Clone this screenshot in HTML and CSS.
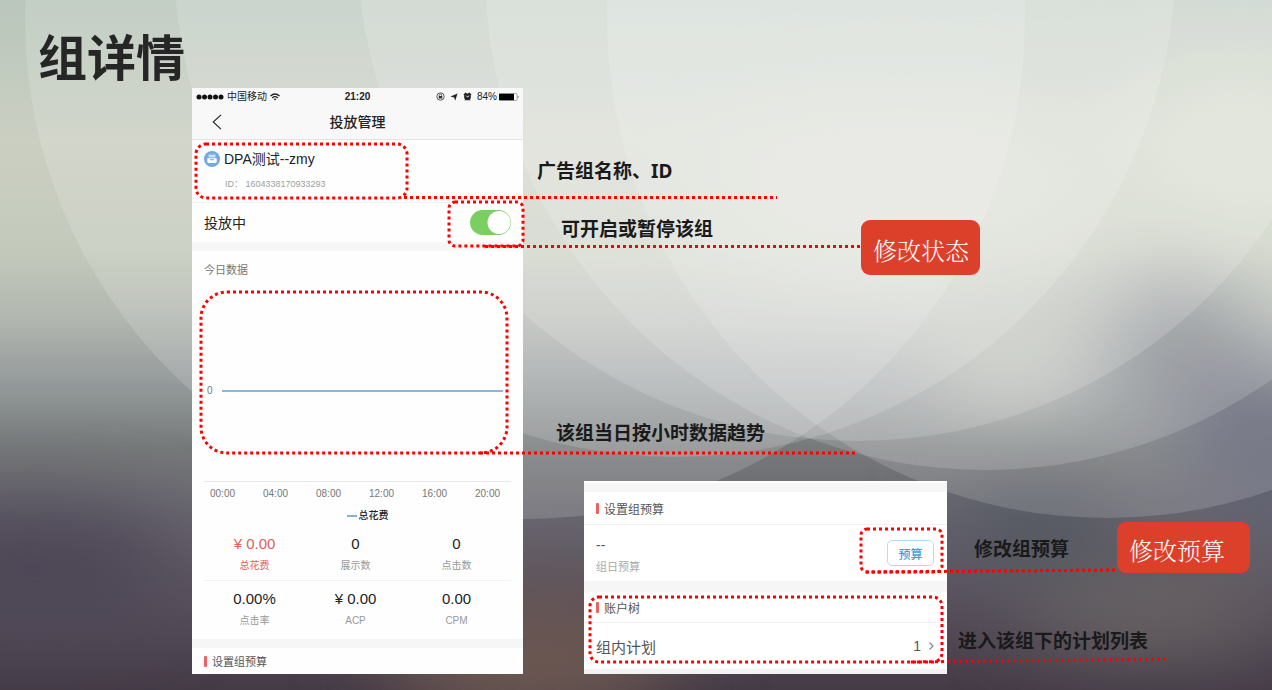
FILE: index.html
```html
<!DOCTYPE html>
<html lang="zh-CN">
<head>
    <meta charset="UTF-8">
    <meta name="viewport" content="width=device-width, initial-scale=1.0">
    <title>组详情</title>
    <link rel="stylesheet" href="styles.css">
</head>
<body>
    <svg class="backdrop" viewBox="0 0 1272 690" preserveAspectRatio="none" aria-hidden="true">
        <defs>
            <linearGradient id="base" x1="0" y1="0" x2="0" y2="1">
                <stop offset="0" stop-color="#b9c6bb"/>
                <stop offset="0.2" stop-color="#cacfc2"/>
                <stop offset="0.36" stop-color="#c4cabb"/>
                <stop offset="0.46" stop-color="#b2b7b0"/>
                <stop offset="0.56" stop-color="#93989a"/>
                <stop offset="0.65" stop-color="#76797a"/>
                <stop offset="0.74" stop-color="#696770"/>
                <stop offset="0.85" stop-color="#5c5460"/>
                <stop offset="1" stop-color="#443b47"/>
            </linearGradient>
            <filter id="soft" x="-100%" y="-100%" width="300%" height="300%" color-interpolation-filters="sRGB">
                <feGaussianBlur stdDeviation="42"/>
            </filter>
        </defs>
        <rect width="1272" height="690" fill="url(#base)"/>
        <g filter="url(#soft)">
            <ellipse cx="900" cy="190" rx="200" ry="90" fill="#d0d4c8"/>
            <ellipse cx="1240" cy="150" rx="120" ry="90" fill="#d2d8c9"/>
            <ellipse cx="1010" cy="350" rx="80" ry="50" fill="#b9beb2"/>
            <ellipse cx="1180" cy="360" rx="70" ry="80" fill="#777b82"/>
            <ellipse cx="1260" cy="450" rx="80" ry="80" fill="#5e6072"/>
            <ellipse cx="1040" cy="530" rx="90" ry="40" fill="#4f5660"/>
            <ellipse cx="1150" cy="610" rx="130" ry="40" fill="#6b6665"/>
            <ellipse cx="30" cy="570" rx="150" ry="60" fill="#4c4555"/>
            <ellipse cx="530" cy="660" rx="150" ry="60" fill="#6f5a52"/>
        </g>
        <g fill="#fff" fill-opacity="0.15">
            <circle cx="525" cy="19" r="500"/>
            <circle cx="675" cy="-44" r="501"/>
            <circle cx="857" cy="-59" r="500"/>
            <circle cx="985" cy="-30" r="500"/>
            <circle cx="1107" cy="18" r="500"/>
        </g>
    </svg>

    <main class="slide">
        <h1>组详情</h1>
        <div class="screens">
            <section class="phone">
                <div class="status-bar">
                    <div class="status-left">
                        <svg width="28" height="8" viewBox="0 0 28 8"><g fill="#111"><circle cx="3" cy="4" r="2.5"/><circle cx="8.5" cy="4" r="2.5"/><circle cx="14" cy="4" r="2.5"/><circle cx="19.500" cy="4" r="2.500"/><circle cx="25" cy="4" r="2.500"/></g></svg>
                        <span>中国移动</span>
                        <svg width="10" height="8" viewBox="0 0 10 8" fill="none" stroke="#222" stroke-width="1.3"><path d="M.5 3Q5-1 9.500 3M2.200 4.900Q5 2.500 7.800 4.900"/><path d="M3.600 6 5 7.600 6.400 6Q5 5 3.600 6Z" fill="#222" stroke="none"/></svg>
                    </div>
                    <strong>21:20</strong>
                    <div class="status-right">
                        <svg width="9" height="9" viewBox="0 0 9 9" fill="none" stroke="#333"><circle cx="4.500" cy="4.500" r="3.700" stroke-width=".8"/><rect x="2.700" y="4" width="3.600" height="2.500" fill="#333" stroke="none"/><path d="M3.400 4V3.200a1.100 1.100 0 0 1 2.200 0V4" stroke-width=".7"/></svg>
                        <svg width="8" height="8" viewBox="0 0 8 8" fill="#222"><path d="M7.500.5 5.200 7.800 4.200 4.400.5 3.600Z"/></svg>
                        <svg width="9" height="9" viewBox="0 0 9 9" fill="#222"><circle cx="4.500" cy="4.800" r="3.400"/><path d="M.5 2.500 2.600.5 4 1.600 1.500 3.800ZM8.500 2.500 6.400.5 5 1.600 7.500 3.800ZM1.500 8.500 2.500 6.500 4 8ZM7.500 8.500 6.500 6.500 5 8Z"/><path d="M3.200 3.600 4.500 5 6.200 3.800" fill="none" stroke="#fff" stroke-width=".9"/></svg>
                        <span>84%</span>
                        <svg width="20" height="8" viewBox="0 0 20 8"><rect x=".5" y=".5" width="17.500" height="7" rx="1" fill="#fff" stroke="#777" stroke-width=".6"/><rect x="0" y=".8" width="15" height="6.400" fill="#000"/><path d="M18.800 2.500Q20.300 4 18.800 5.500Z" fill="#555"/></svg>
                    </div>
                </div>
                <div class="nav-bar">
                    <button class="back" type="button" aria-label="返回"><svg width="10" height="16" viewBox="0 0 10 16" fill="none" stroke="#222" stroke-width="1.100"><path d="M9 .8 1.200 8 9 15.200"/></svg></button>
                    <h2>投放管理</h2>
                </div>
                <div class="group-info">
                    <div class="group-name">
                        <svg width="16" height="16" viewBox="0 0 16 16"><circle cx="8" cy="8" r="8" fill="#72a9e2"/><path d="M4.500 3.500h7v3h-7Z" fill="#b9d6f3"/><path d="M3.300 7.200H12.700V10.500Q12.700 12 11.200 12H4.800Q3.300 12 3.300 10.500Z" fill="#fff"/><path d="M6 8.700h4" stroke="#72a9e2"/><path d="M6 4v2M8 4v2M10 4v2" stroke="#fff" stroke-width=".7"/></svg>
                        <span>DPA测试--zmy</span>
                    </div>
                    <p class="group-id">ID： 1604338170933293</p>
                </div>
                <div class="switch-row">
                    <label for="switch">投放中</label>
                    <input class="switch" type="checkbox" id="switch" checked>
                </div>
                <div class="today">
                    <h3>今日数据</h3>
                    <div class="chart">
                        <span>0</span>
                        <div class="chart-line"></div>
                    </div>
                    <div class="axis">
                        <span>00:00</span>
                        <span>04:00</span>
                        <span>08:00</span>
                        <span>12:00</span>
                        <span>16:00</span>
                        <span>20:00</span>
                    </div>
                    <div class="legend">总花费</div>
                    <dl class="stats">
                        <div class="stat active"><dt>总花费</dt><dd>¥ 0.00</dd></div>
                        <div class="stat"><dt>展示数</dt><dd>0</dd></div>
                        <div class="stat"><dt>点击数</dt><dd>0</dd></div>
                    </dl>
                    <dl class="stats">
                        <div class="stat"><dt>点击率</dt><dd>0.00%</dd></div>
                        <div class="stat"><dt>ACP</dt><dd>¥ 0.00</dd></div>
                        <div class="stat"><dt>CPM</dt><dd>0.00</dd></div>
                    </dl>
                </div>
                <h3 class="bar-title">设置组预算</h3>
            </section>

            <section class="budget">
                <h3 class="bar-title">设置组预算</h3>
                <div class="budget-row">
                    <div class="budget-text">
                        <p class="amount">--</p>
                        <p class="amount-label">组日预算</p>
                    </div>
                    <button class="budget-btn" type="button">预算</button>
                </div>
                <h3 class="bar-title tree">账户树</h3>
                <a class="plan-row" href="#">
                    <span>组内计划</span>
                    <span class="count">1</span>
                    <svg width="5" height="8" viewBox="0 0 5 8" fill="none" stroke="#888" stroke-width="1.200"><path d="M.5.5 4 4 .5 7.500"/></svg>
                </a>
            </section>
        </div>

        <!-- 标注框和引线 -->
        <svg class="marks" aria-hidden="true">
            <rect x="196" y="144" width="211" height="54" rx="10"/>
            <rect x="449" y="202" width="74" height="44" rx="6"/>
            <rect x="201" y="292" width="306" height="161" rx="26"/>
            <rect x="861" y="529" width="81" height="43" rx="6"/>
            <rect x="590" y="597" width="352" height="65" rx="9"/>
            <path d="M404 197.500H777M485 246.500H860M480 453H856M866 572 1118 570M911 662 1168 659"/>
        </svg>
        <p class="note note-name">广告组名称、ID</p>
        <p class="note note-switch">可开启或暂停该组</p>
        <p class="note note-trend">该组当日按小时数据趋势</p>
        <p class="note note-budget">修改组预算</p>
        <p class="note note-plan">进入该组下的计划列表</p>
        <button class="tag tag-status" type="button">修改状态</button>
        <button class="tag tag-budget" type="button">修改预算</button>
    </main>
</body>
</html>
```

FILE: styles.css
```css
* {
    box-sizing: border-box;
}
body {
    margin: 0;
    background-color: #6b6b70;
    font-family: "Liberation Sans", "Noto Sans CJK SC", sans-serif;
}
h1, h2, h3, p, dl, dd {
    margin: 0;
}
svg {
    flex: none;
}
button {
    font-family: inherit;
    cursor: pointer;
}
.backdrop {
    position: absolute;
    top: 0;
    left: 0;
    width: 100%;
    height: 100%;
}
.slide {
    position: relative;
    min-height: 100vh;
    padding-bottom: 16px;
    overflow: hidden;
}
.slide h1 {
    padding: 30px 0 0 38px;
    font-size: 49px;
    line-height: 58px;
    color: #262626;
}
.screens {
    display: flex;
    align-items: flex-end;
    gap: 61px;
    padding-left: 192px;
}

/* 手机页面 */
.phone {
    flex: 0 0 331px;
    background: #fefefe;
    color: #222;
}
.status-bar {
    display: flex;
    align-items: center;
    padding: 0 4px;
    background: #f8f8f8;
    font-size: 10px;
    line-height: 17px;
}
.status-left,
.status-right {
    display: flex;
    flex: 1;
    align-items: center;
    gap: 3px;
}
.status-right {
    justify-content: flex-end;
    gap: 5px;
}
.status-right span {
    margin-right: -3px;
}
.nav-bar {
    display: flex;
    align-items: center;
    height: 35px;
    padding: 0 20px;
    background: #f8f8f8;
    border-bottom: 1px solid #e4e4e4;
}
.nav-bar h2 {
    flex: 1;
    padding-right: 10px;
    font-size: 14px;
    font-weight: 500;
    line-height: 20px;
    text-align: center;
}
.back {
    display: flex;
    padding: 0;
    border: none;
    background: none;
}
.group-info {
    height: 63px;
    padding: 8px 12px 0;
    border-bottom: 1px solid #f2f2f2;
}
.group-name {
    display: flex;
    align-items: center;
    gap: 4px;
    font-size: 14px;
    line-height: 22px;
}
.group-id {
    padding: 4px 0 0 21px;
    font-size: 9px;
    line-height: 20px;
    color: #a0a0a0;
}
.switch-row {
    display: flex;
    align-items: center;
    justify-content: space-between;
    height: 39px;
    padding: 0 12px;
    font-size: 14px;
    line-height: 22px;
}
.switch {
    appearance: none;
    width: 41px;
    height: 25px;
    margin: 0;
    border-radius: 13px;
    background: radial-gradient(circle at 29px 50%, #fff 11px, #79cf60 12px);
}
.today {
    padding: 9px 12px 0;
    border-top: 9px solid #f6f6f6;
    border-bottom: 9px solid #f6f6f6;
}
.today h3 {
    font-size: 11px;
    font-weight: normal;
    line-height: 20px;
    color: #777;
}
.chart {
    display: flex;
    align-items: center;
    gap: 9px;
    height: 202px;
    padding: 20px 8px 0 3px;
    border-bottom: 1px solid #e8e8e8;
    font-size: 10px;
    color: #777;
}
.chart-line {
    flex: 1;
    height: 2px;
    background: #8ab6e0;
}
.axis {
    display: grid;
    grid-template-columns: repeat(6, 53px);
    margin: 0 -8px;
    font-size: 10px;
    line-height: 24px;
    text-align: center;
    color: #777;
}
.legend {
    display: flex;
    align-items: center;
    justify-content: center;
    gap: 2px;
    padding-left: 20px;
    font-size: 10px;
    font-weight: 500;
    line-height: 20px;
}
.legend::before {
    content: "";
    width: 10px;
    height: 2px;
    background: #7eb2e6;
}
.stats {
    display: grid;
    grid-template-columns: repeat(3, 101px);
    height: 54px;
    padding-top: 7px;
    text-align: center;
}
.stats + .stats {
    height: 59px;
    border-top: 1px solid #f2f2f2;
}
.stat {
    display: flex;
    flex-direction: column-reverse;
    justify-content: flex-end;
}
.stat dt {
    font-size: 10px;
    line-height: 22px;
    color: #999;
}
.stat dd {
    font-size: 15px;
    line-height: 22px;
}
.active dt,
.active dd {
    color: #e0605c;
}
.bar-title {
    display: flex;
    align-items: center;
    gap: 5px;
    height: 26px;
    padding-left: 12px;
    font-size: 11px;
    font-weight: normal;
    color: #555;
}
.bar-title::before {
    content: "";
    width: 3px;
    height: 11px;
    border-radius: 1px;
    background: #ec6262;
}

/* 预算卡片 */
.budget {
    flex: 0 0 363px;
    border-top: 2px solid #fff;
    border-bottom: 5px solid #f2f2f2;
    background: #fff;
    color: #555;
}
.budget .bar-title {
    height: 42px;
    border-top: 9px solid #f6f6f6;
    border-bottom: 1px solid #f2f2f2;
    font-size: 12px;
}
.budget .tree {
    border-top-width: 11px;
}
.budget-row {
    display: flex;
    align-items: center;
    justify-content: space-between;
    height: 56px;
    padding: 0 13px 0 12px;
}
.budget-text {
    padding-top: 5px;
}
.amount {
    font-size: 14px;
    line-height: 22px;
}
.amount-label {
    font-size: 11px;
    line-height: 22px;
    color: #aaa;
}
.budget-btn {
    width: 47px;
    height: 26px;
    padding: 0;
    border: 1px solid #b5dcf3;
    border-radius: 5px;
    background: #fff;
    font-size: 12px;
    font-weight: 500;
    color: #3f9fdc;
}
.plan-row {
    display: flex;
    align-items: center;
    height: 46px;
    padding: 0 13px 0 12px;
    font-size: 15px;
    color: inherit;
    text-decoration: none;
}
.count {
    margin-left: auto;
    padding-right: 8px;
    font-size: 14px;
}

/* 标注 */
.marks {
    position: absolute;
    top: 0;
    left: 0;
    width: 100%;
    height: 100%;
    fill: none;
    stroke: #f00;
    stroke-width: 3;
    stroke-dasharray: 3 3;
    pointer-events: none;
}
.note {
    position: absolute;
    font-family: "Noto Sans", "Noto Sans CJK SC", sans-serif;
    font-size: 19px;
    font-weight: bold;
    line-height: 28px;
    color: #1a1a1a;
    white-space: nowrap;
}
.note-name {
    top: 157px;
    left: 537px;
}
.note-switch {
    top: 215px;
    left: 561px;
}
.note-trend {
    top: 419px;
    left: 556px;
}
.note-budget {
    top: 535px;
    left: 974px;
}
.note-plan {
    top: 627px;
    left: 958px;
}
.tag {
    position: absolute;
    padding: 4px 12px 0;
    border: none;
    border-radius: 9px;
    background: #dd402a;
    font-family: "Noto Serif CJK SC", "Noto Sans CJK SC", serif;
    font-size: 24px;
    font-weight: 300;
    line-height: 36px;
    text-align: left;
    color: #fff;
    white-space: nowrap;
}
.tag-status {
    top: 220px;
    left: 861px;
    width: 119px;
    height: 55px;
}
.tag-budget {
    top: 522px;
    left: 1117px;
    width: 133px;
    height: 51px;
}
```
